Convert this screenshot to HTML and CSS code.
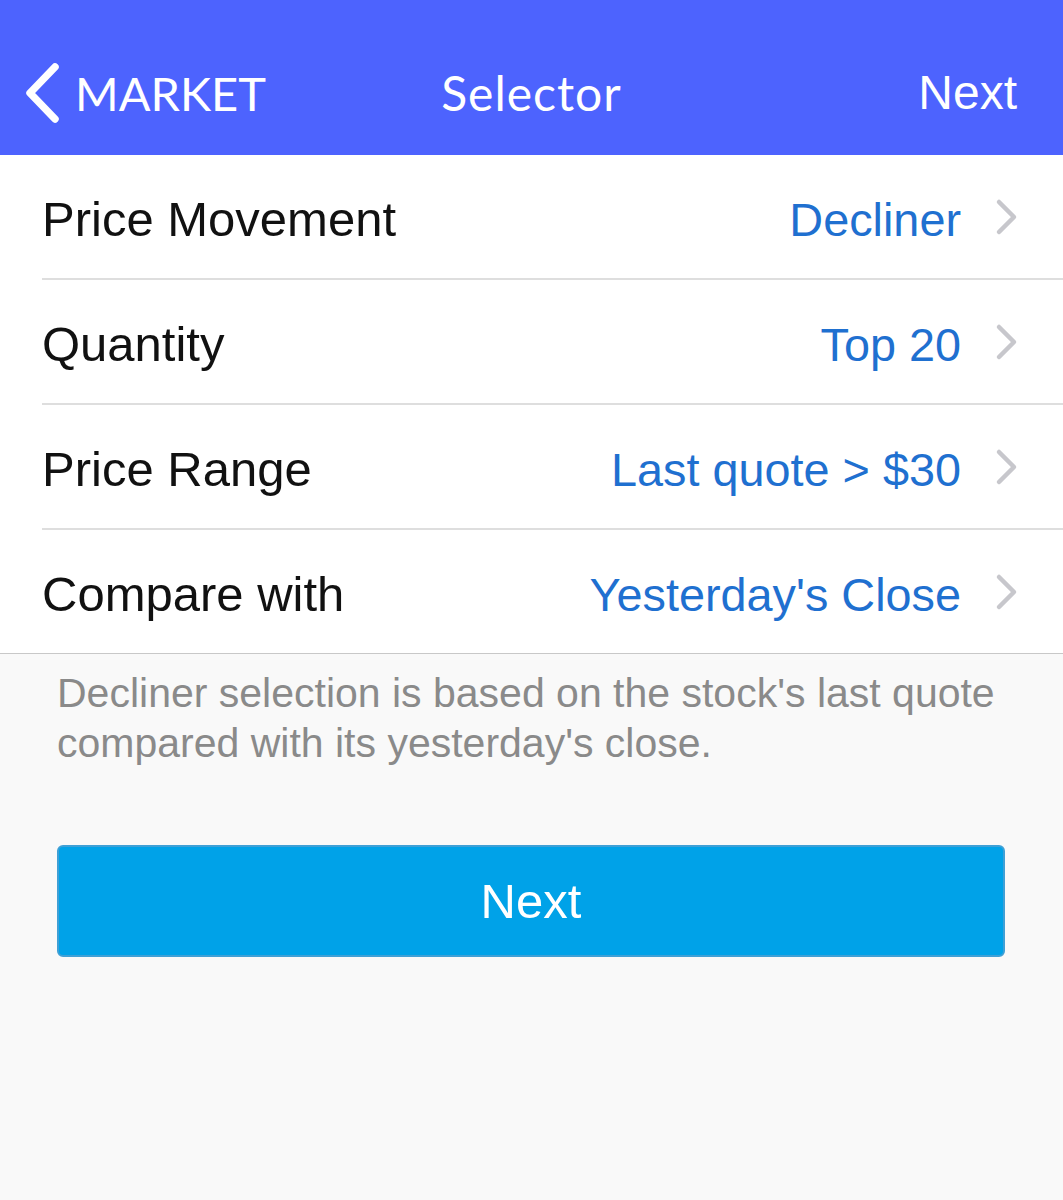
FILE: index.html
```html
<!DOCTYPE html>
<html>
<head>
<meta charset="utf-8">
<link rel="stylesheet" href="styles.css">
</head>
<body>
<header class="navbar">
  <div class="nav-left">
    <svg class="back-icon" width="38" height="62" viewBox="0 0 38 62"><path d="M32 5 L7 31 L32 57" fill="none" stroke="#fff" stroke-width="7.5" stroke-linecap="round" stroke-linejoin="round"/></svg>
    <span class="nav-back-text">MARKET</span>
  </div>
  <div class="nav-title">Selector</div>
  <div class="nav-right">Next</div>
</header>
<main class="content">
  <ul class="list">
    <li class="row"><span class="label">Price Movement</span><span class="value">Decliner</span><svg class="chev" width="24" height="38" viewBox="0 0 24 38"><path d="M4 4 L19 19 L4 34" fill="none" stroke="#c7c7cc" stroke-width="4.5" stroke-linecap="round" stroke-linejoin="round"/></svg></li>
    <li class="row"><span class="label">Quantity</span><span class="value">Top 20</span><svg class="chev" width="24" height="38" viewBox="0 0 24 38"><path d="M4 4 L19 19 L4 34" fill="none" stroke="#c7c7cc" stroke-width="4.5" stroke-linecap="round" stroke-linejoin="round"/></svg></li>
    <li class="row"><span class="label">Price Range</span><span class="value">Last quote &gt; $30</span><svg class="chev" width="24" height="38" viewBox="0 0 24 38"><path d="M4 4 L19 19 L4 34" fill="none" stroke="#c7c7cc" stroke-width="4.5" stroke-linecap="round" stroke-linejoin="round"/></svg></li>
    <li class="row last"><span class="label">Compare with</span><span class="value">Yesterday's Close</span><svg class="chev" width="24" height="38" viewBox="0 0 24 38"><path d="M4 4 L19 19 L4 34" fill="none" stroke="#c7c7cc" stroke-width="4.5" stroke-linecap="round" stroke-linejoin="round"/></svg></li>
  </ul>
  <p class="note">Decliner selection is based on the stock's last quote compared with its yesterday's close.</p>
  <div class="btn-wrap"><button class="btn">Next</button></div>
</main>
</body>
</html>
```
FILE: styles.css
```css
* { box-sizing: border-box; }
html, body { margin: 0; padding: 0; }
body {
  background: #f9f9f9;
  font-family: "Liberation Sans", Arial, sans-serif;
  width: 1063px;
  min-height: 1200px;
}
.navbar {
  background: #4d63fe;
  height: 155px;
  display: flex;
  align-items: center;
  justify-content: space-between;
  padding: 30px 46px 0 23px;
  color: #fff;
  position: relative;
}
.nav-left { display: flex; align-items: center; gap: 14px; }
.back-icon { display: block; }
.nav-back-text {
  font-family: Lato, "Open Sans", sans-serif;
  font-size: 47px;
  letter-spacing: 0;
}
.nav-title {
  position: absolute;
  left: 0; right: 0;
  top: 30px; bottom: 0;
  display: flex;
  align-items: center;
  justify-content: center;
  font-family: Lato, "Open Sans", sans-serif;
  font-size: 48px;
  letter-spacing: 1px;
  pointer-events: none;
}
.nav-right {
  font-size: 48px;
}
.list {
  list-style: none;
  margin: 0;
  padding: 0 0 0 42px;
  background: #fff;
  border-bottom: 1.5px solid #c8c8c8;
}
.row {
  display: flex;
  align-items: center;
  height: 125px;
  border-bottom: 2px solid #dedede;
  padding-right: 46px;
}
.row.last { border-bottom: none; height: 123px; }
.label {
  flex: 1;
  font-size: 49px;
  color: #111;
  margin-top: 4px;
}
.value {
  font-size: 46.8px;
  color: #1f70d0;
  margin-right: 34px;
  margin-top: 6px;
}
.chev { display: block; margin-top: 0; margin-right: -2px; }
.note {
  margin: 14px 40px 0 57px;
  font-size: 41px;
  line-height: 50px;
  color: #8a8a8a;
}
.btn-wrap { padding: 77px 57px 0 57px; }
.btn {
  display: block;
  width: 948px;
  height: 112px;
  background: #00a2e8;
  border: 2px solid #3fa0d6;
  border-radius: 6px;
  color: #fff;
  font-family: "Liberation Sans", Arial, sans-serif;
  font-size: 49px;
  padding: 0;
}
```
